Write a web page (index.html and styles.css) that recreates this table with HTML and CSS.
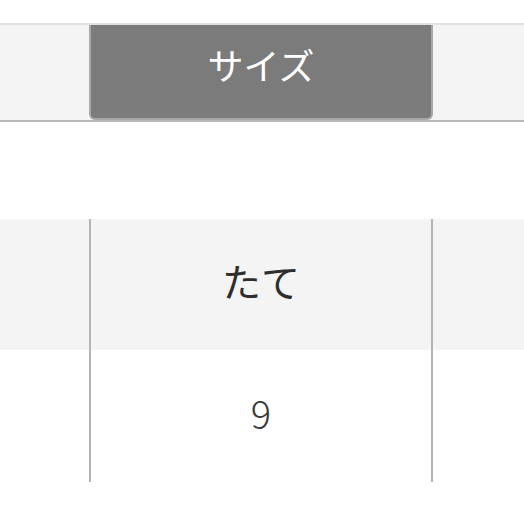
FILE: index.html
```html
<!DOCTYPE html>
<html lang="ja">
<head>
<meta charset="utf-8">
<link rel="stylesheet" href="styles.css">
</head>
<body>
<div class="tabs">
  <div class="tab-side"></div>
  <div class="tab active">サイズ</div>
  <div class="tab-side"></div>
</div>
<div class="table">
  <div class="cell head side"></div>
  <div class="cell head mid">たて</div>
  <div class="cell head side"></div>
  <div class="cell side"></div>
  <div class="cell mid value">9</div>
  <div class="cell side"></div>
</div>
</body>
</html>
```
FILE: styles.css
```css
html, body {
  margin: 0;
  padding: 0;
  background: #ffffff;
  font-family: "Noto Sans CJK JP", "Noto Sans", sans-serif;
}
.tabs {
  margin-top: 23px;
  display: grid;
  grid-template-columns: 89px 344px 1fr;
  height: 95px;
  background: #f4f4f4;
  border-top: 2px solid #e2e2e2;
  border-bottom: 2px solid #b8b8b8;
}
.tab {
  display: flex;
  align-items: center;
  justify-content: center;
}
.tab.active {
  background: #7b7b7b;
  color: #ffffff;
  font-size: 36px;
  border: 2px solid #a8a8a8;
  border-top: none;
  border-radius: 0 0 6px 6px;
  padding-bottom: 16px;
}
.table {
  margin-top: 97px;
  display: grid;
  grid-template-columns: 89px 344px 1fr;
  grid-template-rows: 131px 132px;
}
.cell {
  display: flex;
  align-items: center;
  justify-content: center;
}
.cell.head {
  background: #f4f4f4;
}
.cell.mid {
  border-left: 2px solid #b4b4b4;
  border-right: 2px solid #b4b4b4;
}
.cell.head.mid {
  font-size: 39px;
  color: #2e2e2e;
  padding-bottom: 10px;
}
.cell.value {
  font-size: 38px;
  font-weight: 300;
  color: #3a3a3a;
  padding-bottom: 8px;
}
```
